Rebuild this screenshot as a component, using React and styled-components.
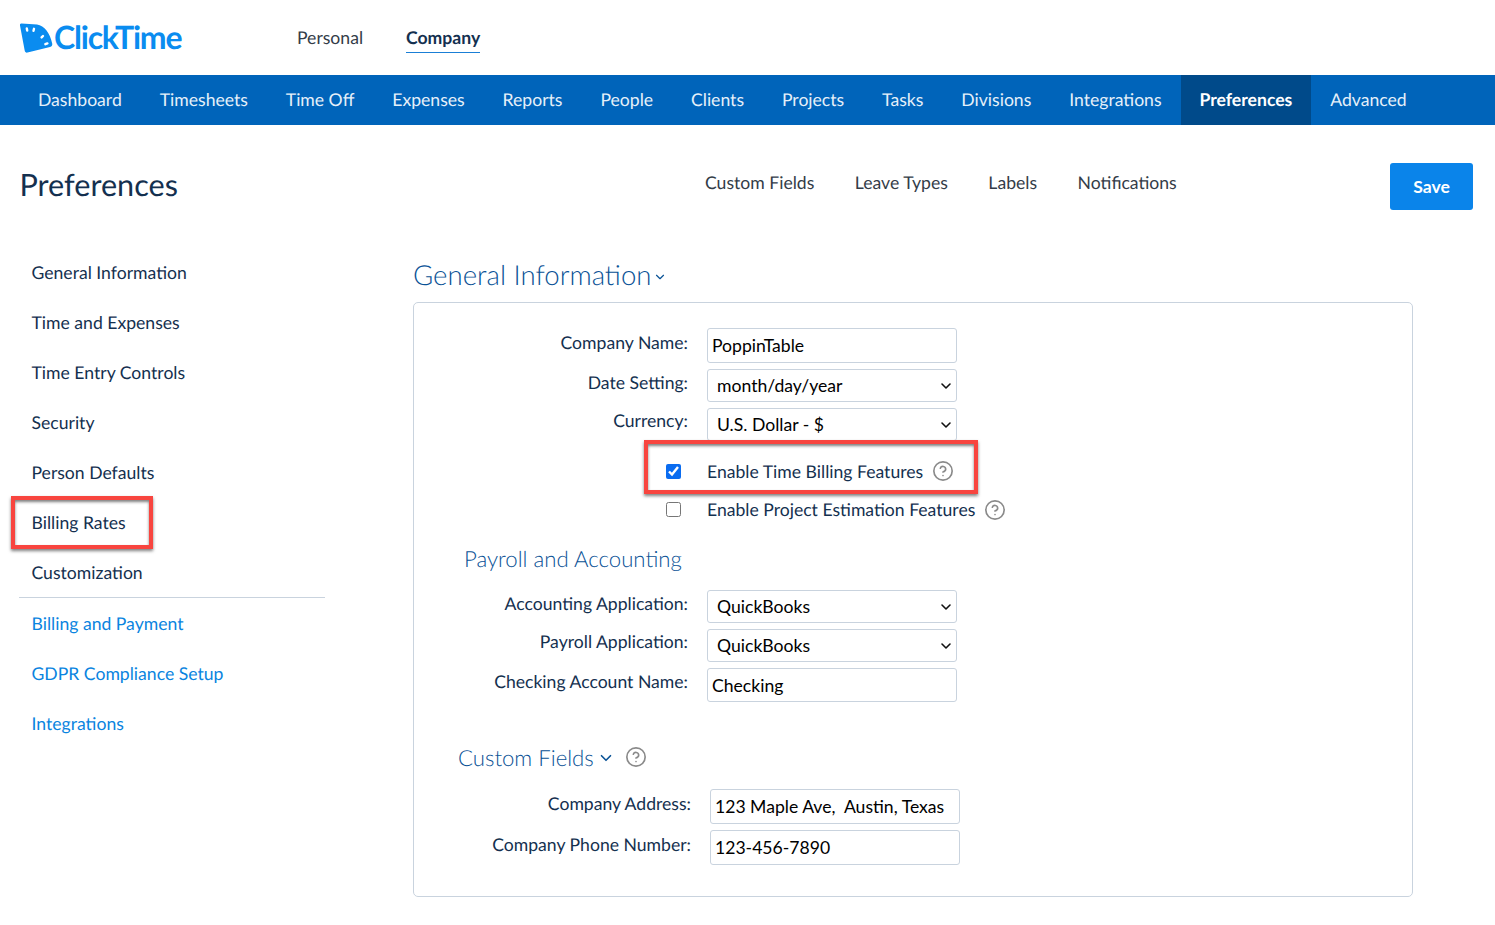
import React from 'react';
import styled, { createGlobalStyle } from 'styled-components';
import { ChevronDown, CircleHelp } from 'lucide-react';

const GlobalStyle = createGlobalStyle`
	* {
		box-sizing: border-box;
	}
	body {
		margin: 0;
		background: #fff;
		color: #14304f;
		font-family: Lato, "Liberation Sans", sans-serif;
		font-size: 17.6px;
		text-rendering: geometricPrecision;
	}
`;

const TopBar = styled.header`
	display: flex;
	align-items: center;
	height: 75px;
	padding: 0 0 2px 19px;
`;

const Logo = styled.div`
	display: flex;
	align-items: center;
	width: 278px;
	color: #0a8cf0;
	font-size: 32px;
	font-weight: 700;
	letter-spacing: -1.2px;
`;

const Scope = styled.a`
	margin-right: 43px;
	padding: 6px 0 4px;
	border-bottom: 1px solid ${p => (p.$active ? '#1a7fd6' : 'transparent')};
	color: ${p => (p.$active ? '#14304f' : '#333c48')};
	font-weight: ${p => (p.$active ? 700 : 400)};
`;

const NavBar = styled.nav`
	display: flex;
	height: 50px;
	padding-left: 19px;
	background: #0064ba;
`;

const NavItem = styled.a`
	display: flex;
	align-items: center;
	padding: 0 18.96px 2px;
	background: ${p => (p.$active ? '#004a8a' : 'transparent')};
	color: ${p => (p.$active ? '#fff' : '#e6f0f9')};
	font-weight: ${p => (p.$active ? 700 : 400)};
`;

const PageHead = styled.div`
	display: flex;
	align-items: flex-start;
	height: 123px;
	padding: 38px 22px 0 19.5px;
`;

const PageTitle = styled.h1`
	width: 685.5px;
	margin: 0;
	color: #14304f;
	font-size: 30.6px;
	font-weight: 400;
	line-height: 44px;
`;

const SubNav = styled.div`
	display: flex;
	gap: 40.5px;
	line-height: 40px;
	color: #333c48;
`;

const SaveButton = styled.button`
	width: 83px;
	height: 47px;
	margin-left: auto;
	border: 0;
	border-radius: 3px;
	background: #0a84ea;
	color: #fff;
	font: 700 17.6px Lato, sans-serif;
`;

const Content = styled.div`
	display: flex;
	padding-left: 19px;
`;

const Sidebar = styled.aside`
	width: 306px;
	margin-right: 88px;
`;

const SideItem = styled.a`
	position: relative;
	display: flex;
	align-items: center;
	height: 50px;
	padding: 0 0 2px 12.5px;
	color: ${p => (p.$link ? '#0a84e0' : '#14304f')};
`;

const SideDivider = styled.div`
	height: 1px;
	margin-bottom: 1px;
	margin-top: -1px;
	background: #c9d3de;
`;

const Highlight = styled.div`
	position: absolute;
	left: ${p => p.$left}px;
	top: ${p => p.$top}px;
	width: ${p => p.$width}px;
	height: ${p => p.$height}px;
	border: 4px solid #f8453f;
	box-shadow: 0 2px 3px rgba(0, 0, 0, 0.5), inset 0 2px 3px rgba(0, 0, 0, 0.5);
	pointer-events: none;
`;

const Main = styled.main`
	width: 1000px;
`;

const SectionTitle = styled.h2`
	display: flex;
	align-items: center;
	height: 54px;
	padding-bottom: 2px;
	margin: 0;
	color: #0a5296;
	font-size: 27.6px;
	font-weight: 300;
`;

const Panel = styled.section`
	padding: 25px 0 31px;
	border: 1px solid #c9d3de;
	border-radius: 5px;
`;

const Row = styled.div`
	display: grid;
	grid-template-columns: ${p => p.$labelWidth || 274}px 250px;
	column-gap: 19px;
	align-items: start;
	margin-bottom: ${p => (p.$last ? 0 : p.$gap || 6)}px;
`;

const Label = styled.label`
	justify-self: end;
	margin-top: ${p => p.$offset}px;
	line-height: 24px;
`;

const TextInput = styled.input`
	width: 250px;
	height: ${p => p.$height || 35}px;
	padding: 0 4px;
	border: 1px solid #c9d3de;
	border-radius: 3px;
	background: #fff;
	color: #000;
	font: 17.6px Lato, sans-serif;
`;

const SelectWrap = styled.div`
	position: relative;
	width: 250px;
	height: 33px;
`;

const Select = styled.select`
	width: 100%;
	height: 100%;
	padding-left: 9px;
	appearance: none;
	border: 1px solid #c9d3de;
	border-radius: 3px;
	background: #fff;
	color: #000;
	font: 17.6px Lato, sans-serif;
`;

const SelectArrow = styled(ChevronDown)`
	position: absolute;
	top: 9px;
	right: 3px;
	color: #111;
	pointer-events: none;
`;

const CheckRow = styled.div`
	position: relative;
	display: grid;
	grid-template-columns: 274px auto;
	column-gap: 19px;
	align-items: center;
	height: ${p => p.$height}px;
`;

const Checkbox = styled.input`
	justify-self: end;
	width: 15px;
	height: 15px;
	margin: 0 7px 0 0;
	accent-color: #0a6cf0;
`;

const CheckLabel = styled.span`
	display: flex;
	align-items: center;
	gap: 9px;
`;

const HelpIcon = styled(CircleHelp)`
	color: #8a8a8a;
	flex: none;
`;

const SubTitle = styled.h3`
	display: flex;
	align-items: center;
	gap: ${p => p.$gap || 0}px;
	height: 30px;
	padding-bottom: 2px;
	margin: ${p => p.$top}px 0 16px ${p => p.$left}px;
	color: #0a5296;
	font-size: 22.2px;
	font-weight: 300;
`;

const TitleGroup = styled.span`
	display: flex;
	align-items: center;
	gap: 3px;
`;

const navItems = ['Dashboard', 'Timesheets', 'Time Off', 'Expenses', 'Reports', 'People', 'Clients', 'Projects', 'Tasks', 'Divisions', 'Integrations', 'Preferences', 'Advanced'];

function LogoMark() {
	return (
		<svg width="35" height="33" viewBox="0 0 35 33">
			<path d="M2.5 3.6 L18 4.4 C25.5 5.4 31 13 33.2 23.5 C33.6 25.4 32.8 26.6 31 27 L8.5 32.6 C7 32.9 6 32.2 5.7 30.6 L1 5.6 C0.8 4.3 1.3 3.5 2.5 3.6 Z" fill="#0a8cf0" />
			<g stroke="#fff" strokeWidth="2.4" strokeLinecap="round">
				<path d="M7.8 8.5 L8.2 10.5" />
				<path d="M15 8.8 L14.5 10.8" />
				<path d="M24 16 L22.6 17.4" />
				<path d="M28.4 23.4 L26.4 24.2" />
			</g>
		</svg>
	);
}

function FormSelect({ value }) {
	return (
		<SelectWrap>
			<Select defaultValue={value}>
				<option>{value}</option>
			</Select>
			<SelectArrow size={16} strokeWidth={2.4} />
		</SelectWrap>
	);
}

function App() {
	return (
		<>
			<GlobalStyle />
			<TopBar>
				<Logo>
					<LogoMark />
					ClickTime
				</Logo>
				<Scope>Personal</Scope>
				<Scope $active>Company</Scope>
			</TopBar>
			<NavBar>
				{navItems.map(item => (
					<NavItem key={item} $active={item === 'Preferences'}>
						{item}
					</NavItem>
				))}
			</NavBar>
			<PageHead>
				<PageTitle>Preferences</PageTitle>
				<SubNav>
					<span>Custom Fields</span>
					<span>Leave Types</span>
					<span>Labels</span>
					<span>Notifications</span>
				</SubNav>
				<SaveButton>Save</SaveButton>
			</PageHead>
			<Content>
				<Sidebar>
					<SideItem>General Information</SideItem>
					<SideItem>Time and Expenses</SideItem>
					<SideItem>Time Entry Controls</SideItem>
					<SideItem>Security</SideItem>
					<SideItem>Person Defaults</SideItem>
					<SideItem>
						Billing Rates
						<Highlight $left={-8} $top={-2} $width={142} $height={53} />
					</SideItem>
					<SideItem>Customization</SideItem>
					<SideDivider />
					<SideItem $link>Billing and Payment</SideItem>
					<SideItem $link>GDPR Compliance Setup</SideItem>
					<SideItem $link>Integrations</SideItem>
				</Sidebar>
				<Main>
					<SectionTitle>
						General Information
						<ChevronDown size={14} strokeWidth={2} style={{ marginTop: 6, marginLeft: 1 }} />
					</SectionTitle>
					<Panel>
						<Row>
							<Label $offset={3}>Company Name:</Label>
							<TextInput defaultValue="PoppinTable" />
						</Row>
						<Row>
							<Label $offset={2}>Date Setting:</Label>
							<FormSelect value="month/day/year" />
						</Row>
						<Row $gap={11}>
							<Label $offset={1}>Currency:</Label>
							<FormSelect value="U.S. Dollar - $" />
						</Row>
						<CheckRow $height={38}>
							<Checkbox type="checkbox" defaultChecked />
							<CheckLabel>
								Enable Time Billing Features
								<HelpIcon size={22} strokeWidth={1.8} />
							</CheckLabel>
							<Highlight $left={230} $top={-12} $width={334} $height={54} />
						</CheckRow>
						<CheckRow $height={39}>
							<Checkbox type="checkbox" />
							<CheckLabel>
								Enable Project Estimation Features
								<HelpIcon size={22} strokeWidth={1.8} />
							</CheckLabel>
						</CheckRow>
						<SubTitle $top={15} $left={50}>Payroll and Accounting</SubTitle>
						<Row>
							<Label $offset={2}>Accounting Application:</Label>
							<FormSelect value="QuickBooks" />
						</Row>
						<Row>
							<Label $offset={1}>Payroll Application:</Label>
							<FormSelect value="QuickBooks" />
						</Row>
						<Row $last>
							<Label $offset={2}>Checking Account Name:</Label>
							<TextInput $height={34} defaultValue="Checking" />
						</Row>
						<SubTitle $top={41} $left={44} $gap={10}>
							<TitleGroup>
								Custom Fields
								<ChevronDown size={18} strokeWidth={2.2} style={{ marginTop: 2 }} />
							</TitleGroup>
							<HelpIcon size={22} strokeWidth={1.8} />
						</SubTitle>
						<Row $labelWidth={277}>
							<Label $offset={3}>Company Address:</Label>
							<TextInput defaultValue="123 Maple Ave,  Austin, Texas" />
						</Row>
						<Row $labelWidth={277} $last>
							<Label $offset={3}>Company Phone Number:</Label>
							<TextInput defaultValue="123-456-7890" />
						</Row>
					</Panel>
				</Main>
			</Content>
		</>
	);
}

export default App;
